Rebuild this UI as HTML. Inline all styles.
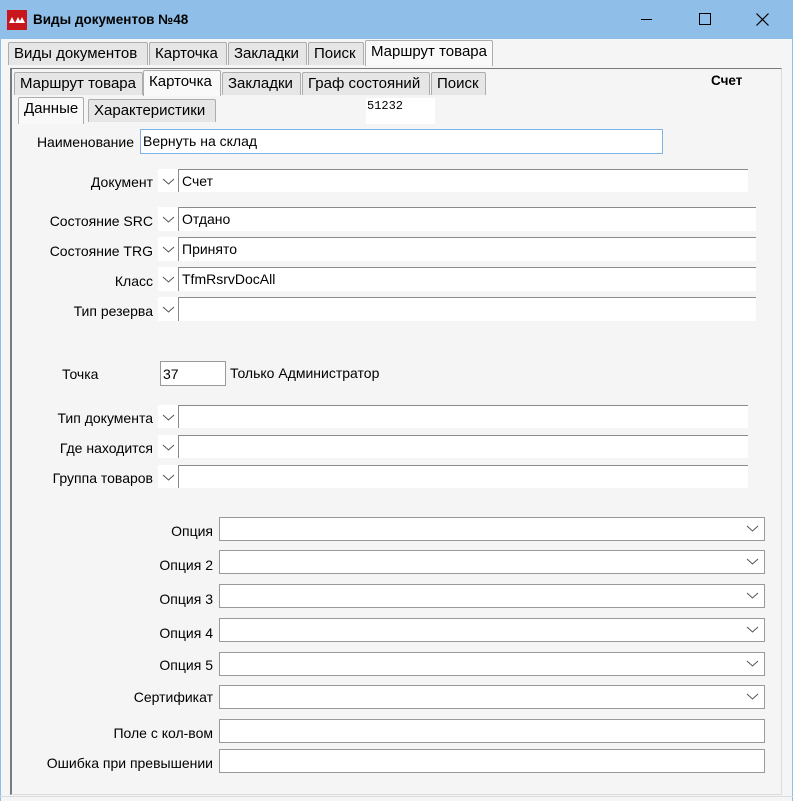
<!DOCTYPE html>
<html><head><meta charset="utf-8"><style>
*{box-sizing:border-box;margin:0;padding:0}
body{width:793px;height:801px;position:relative;overflow:hidden;background:#f5f5f5;font-family:"Liberation Sans","DejaVu Sans",sans-serif;font-size:14px;color:#000}
.a{position:absolute;white-space:nowrap}
.tab{position:absolute;height:23px;border:1px solid #adadad;border-bottom:none;background:#e6e6e6;padding:2px 0 0 5px;border-radius:2px 2px 0 0;font-size:15px}
.tab.s{background:#f9f9f9;height:26px}
.lbl{position:absolute;text-align:right;white-space:nowrap}
.arr{position:absolute;width:20px;background:#fff}
.inp{position:absolute;background:#fff;border-top:1px solid #8a8a8a;border-left:1px solid #8a8a8a;padding:3px 0 0 3px}
.cb{position:absolute;background:#fff;border:1px solid #999;left:219px;width:546px;height:24px}
svg.ch{position:absolute}
</style></head><body>
<div class="a" style="left:0;top:0;width:793px;height:39px;background:#8fbfe8"></div>
<div class="a" style="left:0;top:39px;width:1px;height:762px;background:#8fbfe8"></div>
<div class="a" style="left:792px;top:39px;width:1px;height:762px;background:#8fbfe8"></div>
<div class="a" style="left:7px;top:10px;width:20px;height:20px;background:#c8161d"></div>
<svg class="a" style="left:7px;top:10px" width="20" height="20"><path d="M2 13 L5 7 L8 13 Z M8 13 L11 7 L14 13 Z M12 13 L15 7 L18 13 Z" fill="#fff"/></svg>
<div class="a" style="left:33px;top:12px;font-weight:bold;font-size:13.5px">Виды документов №48</div>
<div class="a" style="left:641px;top:19px;width:11px;height:1px;background:#000"></div>
<div class="a" style="left:699px;top:13px;width:12px;height:12px;border:1px solid #000"></div>
<svg class="a" style="left:756px;top:13px" width="13" height="13"><path d="M0.5 0.5 L12.5 12.5 M12.5 0.5 L0.5 12.5" stroke="#000" stroke-width="1.2"/></svg>

<div class="tab" style="left:8px;top:42px;width:140px">Виды документов</div>
<div class="tab" style="left:149px;top:42px;width:78px">Карточка</div>
<div class="tab" style="left:228px;top:42px;width:79px">Закладки</div>
<div class="tab" style="left:308px;top:42px;width:56px">Поиск</div>
<div class="tab s" style="left:365px;top:40px;width:128px">Маршрут товара</div>

<div class="a" style="left:10px;top:68px;width:772px;height:727px;border-top:1px solid #7a7a7a;border-left:2px solid #7a7a7a;border-right:1px solid #dcdcdc;border-bottom:1px solid #dcdcdc"></div>
<div class="a" style="left:0;top:796px;width:793px;height:1px;background:#dcdcdc"></div>

<div class="tab" style="left:14px;top:72px;width:129px">Маршрут товара</div>
<div class="tab s" style="left:143px;top:70px;width:78px">Карточка</div>
<div class="tab" style="left:222px;top:72px;width:79px">Закладки</div>
<div class="tab" style="left:302px;top:72px;width:128px">Граф состояний</div>
<div class="tab" style="left:431px;top:72px;width:55px">Поиск</div>
<div class="a" style="left:711px;top:73px;font-weight:bold;font-size:13.5px">Счет</div>

<div class="tab s" style="left:18px;top:97px;width:66px;height:27px">Данные</div>
<div class="tab" style="left:88px;top:99px;width:128px">Характеристики</div>
<div class="a" style="left:366px;top:98px;width:69px;height:26px;background:#fff;font-family:'Liberation Mono','DejaVu Sans Mono',monospace;font-size:12px;padding:1px 0 0 1px">51232</div>

<div class="lbl" style="left:20px;width:114px;top:134px">Наименование</div>
<div class="a" style="left:140px;top:129px;width:523px;height:25px;background:#fff;border:1px solid #7eb4ea;padding:3px 0 0 2px">Вернуть на склад</div>

<div class="lbl" style="left:20px;width:133px;top:174px">Документ</div>
<div class="arr" style="left:158px;top:169px;height:23px"></div>
<div class="inp" style="left:178px;top:169px;width:570px;height:23px">Счет</div>
<div class="lbl" style="left:20px;width:133px;top:213px">Состояние SRC</div>
<div class="arr" style="left:158px;top:207px;height:24px"></div>
<div class="inp" style="left:178px;top:207px;width:578px;height:24px">Отдано</div>
<div class="lbl" style="left:20px;width:133px;top:243px">Состояние TRG</div>
<div class="arr" style="left:158px;top:237px;height:24px"></div>
<div class="inp" style="left:178px;top:237px;width:578px;height:24px">Принято</div>
<div class="lbl" style="left:20px;width:133px;top:273px">Класс</div>
<div class="arr" style="left:158px;top:267px;height:24px"></div>
<div class="inp" style="left:178px;top:267px;width:578px;height:24px">TfmRsrvDocAll</div>
<div class="lbl" style="left:20px;width:133px;top:303px">Тип резерва</div>
<div class="arr" style="left:158px;top:297px;height:24px"></div>
<div class="inp" style="left:178px;top:297px;width:578px;height:24px"></div>

<div class="a" style="left:62px;top:366px">Точка</div>
<div class="a" style="left:160px;top:361px;width:66px;height:25px;background:#fff;border:1px solid #999;padding:4px 0 0 2px">37</div>
<div class="a" style="left:230px;top:365px">Только Администратор</div>

<div class="lbl" style="left:20px;width:133px;top:410px">Тип документа</div>
<div class="arr" style="left:158px;top:405px;height:23px"></div>
<div class="inp" style="left:178px;top:405px;width:570px;height:23px"></div>
<div class="lbl" style="left:20px;width:133px;top:440px">Где находится</div>
<div class="arr" style="left:158px;top:435px;height:23px"></div>
<div class="inp" style="left:178px;top:435px;width:570px;height:23px"></div>
<div class="lbl" style="left:20px;width:133px;top:470px">Группа товаров</div>
<div class="arr" style="left:158px;top:465px;height:23px"></div>
<div class="inp" style="left:178px;top:465px;width:570px;height:23px"></div>

<svg class="ch" style="left:162px;top:175px" width="14" height="320" fill="none" stroke="#555" stroke-width="1">
<path d="M1 4 L6.5 9 L12 4"/><path d="M1 42 L6.5 47 L12 42"/><path d="M1 72 L6.5 77 L12 72"/><path d="M1 102 L6.5 107 L12 102"/><path d="M1 132 L6.5 137 L12 132"/><path d="M1 240 L6.5 245 L12 240"/><path d="M1 270 L6.5 275 L12 270"/><path d="M1 300 L6.5 305 L12 300"/>
</svg>

<div class="lbl" style="left:20px;width:193px;top:523px">Опция</div>
<div class="cb" style="top:517px"></div>
<div class="lbl" style="left:20px;width:193px;top:557px">Опция 2</div>
<div class="cb" style="top:550px"></div>
<div class="lbl" style="left:20px;width:193px;top:591px">Опция 3</div>
<div class="cb" style="top:584px"></div>
<div class="lbl" style="left:20px;width:193px;top:625px">Опция 4</div>
<div class="cb" style="top:618px"></div>
<div class="lbl" style="left:20px;width:193px;top:657px">Опция 5</div>
<div class="cb" style="top:652px"></div>
<div class="lbl" style="left:20px;width:193px;top:689px">Сертификат</div>
<div class="cb" style="top:685px"></div>
<div class="lbl" style="left:20px;width:193px;top:725px">Поле с кол-вом</div>
<div class="cb" style="top:719px"></div>
<div class="lbl" style="left:20px;width:193px;top:755px">Ошибка при превышении</div>
<div class="cb" style="top:749px"></div>

<svg class="ch" style="left:746px;top:524px" width="14" height="180" fill="none" stroke="#555" stroke-width="1">
<path d="M1 2 L6.5 7 L12 2"/><path d="M1 35 L6.5 40 L12 35"/><path d="M1 69 L6.5 74 L12 69"/><path d="M1 103 L6.5 108 L12 103"/><path d="M1 137 L6.5 142 L12 137"/><path d="M1 170 L6.5 175 L12 170"/>
</svg>
</body></html>
